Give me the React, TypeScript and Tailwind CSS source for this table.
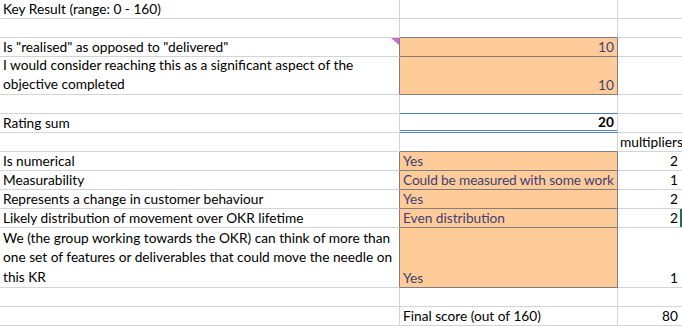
import React from "react";

const G = "border-r border-b border-[#d4d4d4]";

function Cell({
  className = "",
  children,
}: {
  className?: string;
  children?: React.ReactNode;
}) {
  return (
    <div className={"box-border flex flex-col justify-end overflow-hidden " + className}>
      {children}
    </div>
  );
}

export default function App() {
  const orange = "bg-[#ffcc99] text-[#3f3f76] border-r border-b border-[#7f7f7f]";
  const aOr = "border-b border-[#d4d4d4] border-r-[#7f7f7f] border-r";
  return (
    <div
      className="w-[682px] h-[326px] overflow-hidden bg-white text-black text-[13.7px] leading-[18px]"
      style={{ fontFamily: "Lato, 'Open Sans', sans-serif" }}
    >
      <div className="grid grid-cols-[400px_218px_64px] grid-rows-[19px_19px_19px_38px_19px_19px_19px_19px_19px_19px_19px_60px_19px_19px]">
        {/* row 1 */}
        <Cell className={G + " pl-[3px]"}>
          <span className="whitespace-nowrap">Key Result (range: 0 - 160)</span>
        </Cell>
        <Cell className={G} />
        <Cell className="border-b border-[#d4d4d4]" />
        {/* row 2 */}
        <Cell className={G} />
        <Cell className="border-r border-[#d4d4d4] border-b border-b-[#7f7f7f]" />
        <Cell className="border-b border-[#d4d4d4]" />
        {/* row 3 */}
        <Cell className={aOr + " pl-[3px] relative"}>
          <span className="whitespace-nowrap">Is "realised" as opposed to "delivered"</span>
          <svg className="absolute right-0 top-0" width="8" height="7" viewBox="0 0 8 7">
            <polygon points="0,0 8,0 8,7" fill="#c86dd4" />
          </svg>
        </Cell>
        <Cell className={orange + " items-end pr-[3px]"}>10</Cell>
        <Cell className="border-b border-[#d4d4d4]" />
        {/* row 4 */}
        <Cell className={aOr + " pl-[3px] leading-[18.5px] pb-[1px]"}>
          <span className="whitespace-nowrap">I would consider reaching this as a significant aspect of the</span>
          <span className="whitespace-nowrap">objective completed</span>
        </Cell>
        <Cell className={orange + " items-end pr-[3px]"}>10</Cell>
        <Cell className="border-b border-[#d4d4d4]" />
        {/* row 5 */}
        <Cell className={G} />
        <Cell className="border-r border-[#d4d4d4] border-b border-b-[#4f81bd]" />
        <Cell className="border-b border-[#d4d4d4]" />
        {/* row 6 */}
        <Cell className={G + " pl-[3px]"}>Rating sum</Cell>
        <Cell className="border-r border-[#d4d4d4] border-b-[3px] border-double border-b-[#4f81bd] items-end pr-[3px] font-bold leading-[16px]">
          20
        </Cell>
        <Cell className="border-b border-[#d4d4d4]" />
        {/* row 7 */}
        <Cell className={G} />
        <Cell className="border-r border-[#d4d4d4] border-b border-b-[#7f7f7f]" />
        <Cell className="border-b border-[#d4d4d4] pl-[2px]">
          <span className="whitespace-nowrap">multipliers</span>
        </Cell>
        {/* row 8 */}
        <Cell className={aOr + " pl-[3px]"}>Is numerical</Cell>
        <Cell className={orange + " pl-[3px]"}>Yes</Cell>
        <Cell className="border-b border-[#d4d4d4] items-end pr-[4px]">2</Cell>
        {/* row 9 */}
        <Cell className={aOr + " pl-[3px]"}>Measurability</Cell>
        <Cell className={orange + " pl-[3px]"}>
          <span className="whitespace-nowrap tracking-[-0.12px]">Could be measured with some work</span>
        </Cell>
        <Cell className="border-b border-[#d4d4d4] items-end pr-[4px]">1</Cell>
        {/* row 10 */}
        <Cell className={aOr + " pl-[3px]"}>
          <span className="whitespace-nowrap">Represents a change in customer behaviour</span>
        </Cell>
        <Cell className={orange + " pl-[3px]"}>Yes</Cell>
        <Cell className="border-b border-[#d4d4d4] items-end pr-[4px]">2</Cell>
        {/* row 11 */}
        <Cell className={aOr + " pl-[3px]"}>
          <span className="whitespace-nowrap">Likely distribution of movement over OKR lifetime</span>
        </Cell>
        <Cell className={orange + " pl-[3px]"}>Even distribution</Cell>
        <Cell className="border-b border-[#d4d4d4] items-end pr-[4px] shadow-[inset_-2px_0_0_#217346]">2</Cell>
        {/* row 12 */}
        <Cell className={aOr + " pl-[3px] leading-[19.5px] pb-[1px]"}>
          <span className="whitespace-nowrap">We (the group working towards the OKR) can think of more than</span>
          <span className="whitespace-nowrap">one set of features or deliverables that could move the needle on</span>
          <span className="whitespace-nowrap">this KR</span>
        </Cell>
        <Cell className={orange + " pl-[3px]"}>Yes</Cell>
        <Cell className="border-b border-[#d4d4d4] items-end pr-[4px]">1</Cell>
        {/* row 13 */}
        <Cell className={G} />
        <Cell className={G} />
        <Cell className="border-b border-[#d4d4d4]" />
        {/* row 14 */}
        <Cell className={G} />
        <Cell className={G + " pl-[3px]"}>
          <span className="whitespace-nowrap">Final score (out of 160)</span>
        </Cell>
        <Cell className="border-b border-[#d4d4d4] items-end pr-[4px]">80</Cell>
      </div>
    </div>
  );
}
